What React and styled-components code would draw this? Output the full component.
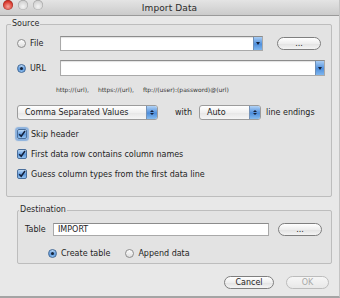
import React from 'react';
import styled, { createGlobalStyle } from 'styled-components';

const GlobalStyle = createGlobalStyle`
  html, body {
    margin: 0;
    padding: 0;
    background: #e8e8e8;
  }
`;

const Window = styled.div`
  width: 340px;
  height: 298px;
  box-sizing: border-box;
  display: flex;
  flex-direction: column;
  background: #e8e8e8;
  border-bottom: 2px solid #a4a4a4;
  border-right: 1px solid #c4c4c4;
  font-family: "DejaVu Sans", "Liberation Sans", sans-serif;
  font-size: 8px;
  color: #1e1e1e;
  overflow: hidden;
`;

const TitleBar = styled.div`
  height: 16px;
  flex: none;
  display: grid;
  grid-template-columns: 60px 1fr 60px;
  align-items: center;
  background: linear-gradient(#e4e4e4, #cbcbcb);
  border-bottom: 1px solid #9a9a9a;
  box-sizing: border-box;
  overflow: hidden;
`;

const Lights = styled.div`
  display: flex;
  gap: 5px;
  padding-left: 3px;
  margin-top: -5px;
`;

const Light = styled.span`
  width: 10px;
  height: 10px;
  border-radius: 50%;
  background: ${({ red }) =>
    red
      ? 'radial-gradient(circle at 50% 65%, #f6a59b, #d8362a 60%, #9c1c12)'
      : 'radial-gradient(circle at 50% 65%, #f4f4f4, #d4d4d4 60%, #b0b0b0)'};
  box-shadow: inset 0 0 0 0.5px rgba(0, 0, 0, 0.25);
`;

const Title = styled.div`
  text-align: center;
  font-size: 9px;
  color: #2a2a2a;
  letter-spacing: 0.1px;
`;

const Content = styled.div`
  flex: 1;
  display: flex;
  flex-direction: column;
  padding: 3px 7px 0 6px;
`;

const Group = styled.fieldset`
  margin: ${({ indent }) => (indent ? '8px 0 0 11px' : '0')};
  padding: ${({ pad }) => pad};
  border: 1px solid #bdbdbd;
  border-radius: 2px;
  background: #e3e3e3;
  min-width: 0;
  display: flex;
  flex-direction: column;
`;

const Legend = styled.legend`
  padding: 0 1px;
  margin-left: -6px;
  font-size: 8px;
  line-height: 10px;
  color: #2a2a2a;
`;

const Row = styled.div`
  display: flex;
  align-items: center;
  height: ${({ h }) => h || 16}px;
  margin-top: ${({ mt }) => mt || 0}px;
  padding-left: ${({ pl }) => pl || 0}px;
`;

const RadioLabel = styled.label`
  display: flex;
  align-items: center;
  gap: 4px;
  width: ${({ w }) => (w ? `${w}px` : 'auto')};
  flex: none;
  margin-right: ${({ mr }) => mr || 0}px;
`;

const RadioDot = styled.span`
  width: 9px;
  height: 9px;
  box-sizing: border-box;
  border-radius: 50%;
  flex: none;
  display: flex;
  align-items: center;
  justify-content: center;
  border: 1px solid ${({ on }) => (on ? '#3f6796' : '#8d8d8d')};
  background: ${({ on }) =>
    on ? 'linear-gradient(#bcd8f5, #5d98dc 55%, #8fc0f0)' : 'linear-gradient(#fdfdfd, #dedede)'};

  &::after {
    content: '';
    display: ${({ on }) => (on ? 'block' : 'none')};
    width: 3px;
    height: 3px;
    border-radius: 50%;
    background: #152338;
  }
`;

const Combo = styled.div`
  flex: 1;
  height: ${({ h }) => h || 15}px;
  display: flex;
  background: #fff;
  border: 1px solid #a9a9a9;
  border-top-color: #8c8c8c;
  box-shadow: inset 0 1px 1px rgba(0, 0, 0, 0.12);
  box-sizing: border-box;
`;

const ComboArrow = styled.span`
  margin-left: auto;
  width: 8px;
  align-self: stretch;
  background: linear-gradient(#a9cdf4, #4f8fdc 55%, #7eb6ee);
  border-left: 1px solid #6e8fb6;
  display: flex;
  align-items: center;
  justify-content: center;

  &::after {
    content: '';
    border-left: 2px solid transparent;
    border-right: 2px solid transparent;
    border-top: 3px solid #14213a;
  }
`;

const PushButton = styled.button`
  flex: none;
  width: ${({ w }) => w}px;
  height: 13px;
  margin: ${({ m }) => m || 0};
  padding: 0;
  border-radius: 7px;
  border: 1px solid ${({ disabled }) => (disabled ? '#bcbcbc' : '#7f7f7f')};
  background: ${({ disabled }) =>
    disabled ? 'linear-gradient(#f6f6f6, #e8e8e8)' : 'linear-gradient(#ffffff, #eeeeee 50%, #e2e2e2 51%, #f4f4f4)'};
  font-family: inherit;
  font-size: 8px;
  line-height: 11px;
  color: ${({ disabled }) => (disabled ? '#a8a8a8' : '#1e1e1e')};
`;

const Help = styled.div`
  display: flex;
  gap: 9px;
  height: 10px;
  align-items: center;
  margin: 8px 0 0 39px;
  font-size: 6px;
  color: #333;
`;

const Popup = styled.div`
  width: ${({ w }) => w}px;
  height: 15px;
  flex: none;
  box-sizing: border-box;
  display: flex;
  align-items: center;
  padding-left: 7px;
  border: 1px solid #9c9c9c;
  border-radius: 3px;
  background: linear-gradient(#ffffff, #f0f0f0 50%, #e6e6e6 51%, #f6f6f6);
  overflow: hidden;
`;

const Stepper = styled.span`
  margin-left: auto;
  width: 10px;
  align-self: stretch;
  background: linear-gradient(#b2d3f6, #4d8ddb 55%, #86bcef);
  border-left: 1px solid #7593b8;
  display: flex;
  flex-direction: column;
  align-items: center;
  justify-content: center;
  gap: 1px;

  &::before, &::after {
    content: '';
    border-left: 2px solid transparent;
    border-right: 2px solid transparent;
  }
  &::before { border-bottom: 2px solid #14213a; }
  &::after { border-top: 2px solid #14213a; }
`;

const Word = styled.span`
  margin: 0 ${({ mr }) => mr || 0}px 0 ${({ ml }) => ml || 0}px;
  white-space: nowrap;
`;

const CheckRow = styled.label`
  display: flex;
  align-items: center;
  gap: 4px;
  height: 14px;
  margin-top: ${({ mt }) => mt}px;
`;

const CheckBox = styled.span`
  width: 10px;
  height: 10px;
  flex: none;
  box-sizing: border-box;
  border-radius: 2px;
  border: 1px solid #4a6f9c;
  background: linear-gradient(#c0dbf6, #5f99dd 55%, #94c3f0);
  box-shadow: ${({ focus }) => (focus ? '0 0 1px 1.5px rgba(110, 160, 220, 0.75)' : 'none')};
  display: flex;
  align-items: center;
  justify-content: center;
`;

const TableLabel = styled.span`
  width: 28px;
  flex: none;
`;

const Field = styled.div`
  flex: 1;
  height: 13px;
  box-sizing: border-box;
  background: #fff;
  border: 1px solid #a9a9a9;
  border-top-color: #8c8c8c;
  padding-left: 4px;
  display: flex;
  align-items: center;
`;

const Buttons = styled.div`
  display: flex;
  justify-content: flex-end;
  gap: 12px;
  margin-top: 12px;
  padding-right: 3px;
`;

const Check = () => (
  <svg width="8" height="8" viewBox="0 0 8 8">
    <path d="M1.2 4.2 L3.2 6.3 L7 1" fill="none" stroke="#13213b" strokeWidth="1.5" />
  </svg>
);

export default function App() {
  return (
    <>
      <GlobalStyle />
      <Window>
        <TitleBar>
          <Lights>
            <Light red />
            <Light />
            <Light />
          </Lights>
          <Title>Import Data</Title>
          <span />
        </TitleBar>
        <Content>
          <Group pad="0 6px 15px 10px">
            <Legend>Source</Legend>
            <Row mt={6}>
              <RadioLabel w={43}>
                <RadioDot />
                File
              </RadioLabel>
              <Combo>
                <ComboArrow />
              </Combo>
              <PushButton w={44} m="0 4px 0 14px">...</PushButton>
            </Row>
            <Row mt={9}>
              <RadioLabel w={43}>
                <RadioDot on />
                URL
              </RadioLabel>
              <Combo h={16}>
                <ComboArrow />
              </Combo>
            </Row>
            <Help>
              <span>http://(url),</span>
              <span>https://(url),</span>
              <span>ftp://(user):(password)@(url)</span>
            </Help>
            <Row mt={10}>
              <Popup w={141}>
                Comma Separated Values
                <Stepper />
              </Popup>
              <Word ml={17} mr={7}>with</Word>
              <Popup w={62}>
                Auto
                <Stepper />
              </Popup>
              <Word ml={5}>line endings</Word>
            </Row>
            <CheckRow mt={7}>
              <CheckBox focus>
                <Check />
              </CheckBox>
              Skip header
            </CheckRow>
            <CheckRow mt={6}>
              <CheckBox>
                <Check />
              </CheckBox>
              First data row contains column names
            </CheckRow>
            <CheckRow mt={6}>
              <CheckBox>
                <Check />
              </CheckBox>
              Guess column types from the first data line
            </CheckRow>
          </Group>
          <Group indent pad="0 9px 4px 7px">
            <Legend>Destination</Legend>
            <Row h={13} mt={8}>
              <TableLabel>Table</TableLabel>
              <Field>IMPORT</Field>
              <PushButton w={44} m="0 0 0 9px">...</PushButton>
            </Row>
            <Row h={12} mt={11} pl={23}>
              <RadioLabel mr={15}>
                <RadioDot on />
                Create table
              </RadioLabel>
              <RadioLabel>
                <RadioDot />
                Append data
              </RadioLabel>
            </Row>
          </Group>
          <Buttons>
            <PushButton w={50}>Cancel</PushButton>
            <PushButton w={43} disabled>OK</PushButton>
          </Buttons>
        </Content>
      </Window>
    </>
  );
}
